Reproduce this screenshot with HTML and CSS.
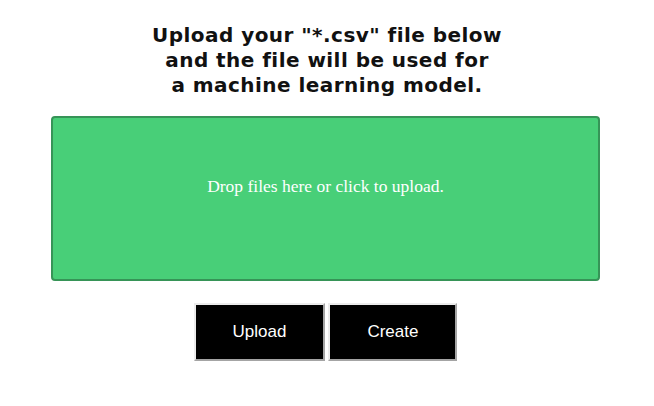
FILE: index.html
```html
<!DOCTYPE html>
<html>
<head>
<meta charset="utf-8">
<link rel="stylesheet" href="styles.css">
</head>
<body>
<main class="page">
  <h1 class="title">Upload your "*.csv" file below<br>and the file will be used for<br>a machine learning model.</h1>
  <div class="dropzone">
    <p class="drop-msg">Drop files here or click to upload.</p>
  </div>
  <div class="actions">
    <button class="btn">Upload</button>
    <button class="btn">Create</button>
  </div>
</main>
</body>
</html>
```
FILE: styles.css
```css
html, body {
  margin: 0;
  padding: 0;
  background: #ffffff;
}
.page {
  padding: 23px 8px 0;
  display: flex;
  flex-direction: column;
  align-items: center;
}
.title {
  margin: 0;
  font-family: "DejaVu Sans", Verdana, sans-serif;
  font-weight: bold;
  font-size: 20px;
  letter-spacing: 0.45px;
  line-height: 25px;
  color: #111111;
  text-align: center;
}
.dropzone {
  box-sizing: border-box;
  margin: 18px 3px 0 0;
  width: 549px;
  height: 165px;
  background: #48cf78;
  border: 2px solid #369457;
  border-radius: 4px;
  display: flex;
  justify-content: center;
  padding-top: 58px;
}
.drop-msg {
  margin: 0;
  font-family: "Liberation Serif", "Times New Roman", serif;
  font-size: 17.5px;
  line-height: 20px;
  color: #ffffff;
}
.actions {
  margin: 22px 3px 0 0;
  display: flex;
  gap: 3px;
}
.btn {
  height: 58px;
  padding: 0 37px;
  background: #000000;
  color: #ffffff;
  font-family: "Liberation Sans", Arial, sans-serif;
  font-size: 17px;
  border-style: solid;
  border-width: 2px;
  border-color: #ececec #a4a4a4 #a4a4a4 #ececec;
}
```
